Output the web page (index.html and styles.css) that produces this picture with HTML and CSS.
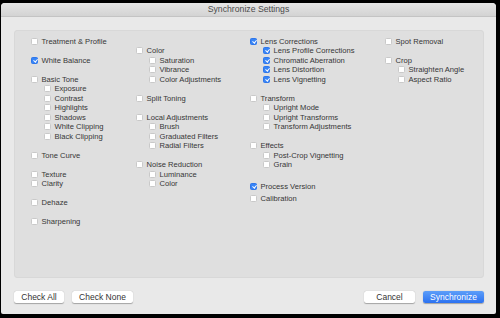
FILE: index.html
```html
<!DOCTYPE html>
<html lang="en">
  <head>
    <meta charset="UTF-8" />
    <title>Synchronize Settings</title>
    <link rel="stylesheet" href="styles.css">
  </head>
  <body>
    <div class="window">
      <!-- title bar -->
      <div class="titlebar">Synchronize Settings</div>

      <div class="content">
        <div class="panel">
          <!-- column 1 -->
          <div class="col">
            <div class="group"><div class="item"><span class="box"></span>Treatment &amp; Profile</div></div>
            <div class="group"><div class="item"><span class="box checked"></span>White Balance</div></div>
            <div class="group">
              <div class="item"><span class="box"></span>Basic Tone</div>
              <div class="item sub"><span class="box"></span>Exposure</div>
              <div class="item sub"><span class="box"></span>Contrast</div>
              <div class="item sub"><span class="box"></span>Highlights</div>
              <div class="item sub"><span class="box"></span>Shadows</div>
              <div class="item sub"><span class="box"></span>White Clipping</div>
              <div class="item sub"><span class="box"></span>Black Clipping</div>
            </div>
            <div class="group"><div class="item"><span class="box"></span>Tone Curve</div></div>
            <div class="group">
              <div class="item"><span class="box"></span>Texture</div>
              <div class="item"><span class="box"></span>Clarity</div>
            </div>
            <div class="group"><div class="item"><span class="box"></span>Dehaze</div></div>
            <div class="group"><div class="item"><span class="box"></span>Sharpening</div></div>
          </div>

          <!-- column 2 -->
          <div class="col col-offset">
            <div class="group">
              <div class="item"><span class="box"></span>Color</div>
              <div class="item sub"><span class="box"></span>Saturation</div>
              <div class="item sub"><span class="box"></span>Vibrance</div>
              <div class="item sub"><span class="box"></span>Color Adjustments</div>
            </div>
            <div class="group"><div class="item"><span class="box"></span>Split Toning</div></div>
            <div class="group">
              <div class="item"><span class="box"></span>Local Adjustments</div>
              <div class="item sub"><span class="box"></span>Brush</div>
              <div class="item sub"><span class="box"></span>Graduated Filters</div>
              <div class="item sub"><span class="box"></span>Radial Filters</div>
            </div>
            <div class="group">
              <div class="item"><span class="box"></span>Noise Reduction</div>
              <div class="item sub"><span class="box"></span>Luminance</div>
              <div class="item sub"><span class="box"></span>Color</div>
            </div>
          </div>

          <!-- column 3 -->
          <div class="col">
            <div class="group">
              <div class="item"><span class="box checked"></span>Lens Corrections</div>
              <div class="item sub"><span class="box checked"></span>Lens Profile Corrections</div>
              <div class="item sub"><span class="box checked"></span>Chromatic Aberration</div>
              <div class="item sub"><span class="box checked"></span>Lens Distortion</div>
              <div class="item sub"><span class="box checked"></span>Lens Vignetting</div>
            </div>
            <div class="group">
              <div class="item"><span class="box"></span>Transform</div>
              <div class="item sub"><span class="box"></span>Upright Mode</div>
              <div class="item sub"><span class="box"></span>Upright Transforms</div>
              <div class="item sub"><span class="box"></span>Transform Adjustments</div>
            </div>
            <div class="group">
              <div class="item"><span class="box"></span>Effects</div>
              <div class="item sub"><span class="box"></span>Post-Crop Vignetting</div>
              <div class="item sub"><span class="box"></span>Grain</div>
            </div>
            <div class="group loose">
              <div class="item"><span class="box checked"></span>Process Version</div>
              <div class="item"><span class="box"></span>Calibration</div>
            </div>
          </div>

          <!-- column 4 -->
          <div class="col">
            <div class="group"><div class="item"><span class="box"></span>Spot Removal</div></div>
            <div class="group">
              <div class="item"><span class="box"></span>Crop</div>
              <div class="item sub"><span class="box"></span>Straighten Angle</div>
              <div class="item sub"><span class="box"></span>Aspect Ratio</div>
            </div>
          </div>
        </div>

        <!-- buttons -->
        <div class="footer">
          <div class="btn-row">
            <button class="btn btn-all">Check All</button>
            <button class="btn btn-none">Check None</button>
          </div>
          <div class="btn-row">
            <button class="btn btn-cancel">Cancel</button>
            <button class="btn btn-primary">Synchronize</button>
          </div>
        </div>
      </div>
    </div>
  </body>
</html>
```

FILE: styles.css
```css
:root {
  --row: 9.5px;
  --text: #363636;
  --blue: #3784f6;
}

* {
  margin: 0;
  padding: 0;
  box-sizing: border-box;
}

body {
  font-family: "Liberation Sans", Arial, sans-serif;
  background: #000;
  width: 500px;
  height: 318px;
  overflow: hidden;
  padding: 3px 4px 4px 1px;
}

.window {
  width: 495px;
  height: 311px;
  background: #e9e9e9;
  border-radius: 4px 4px 2px 2px;
  display: flex;
  flex-direction: column;
  overflow: hidden;
}

/* title bar */
.titlebar {
  height: 14px;
  background: linear-gradient(to bottom, #e6e6e6, #d3d3d3);
  border-bottom: 1px solid #c4c4c4;
  text-align: center;
  font-size: 8.7px;
  line-height: 13px;
  color: #4b4b4b;
}

.content {
  flex: 1;
  padding: 13px 12px 11px 13px;
  display: flex;
  flex-direction: column;
}

/* options panel */
.panel {
  flex: 1;
  background: #dfdfdf;
  border: 1px solid #d8d8d8;
  border-radius: 3px;
  padding: 5.25px 0 0 16px;
  display: grid;
  grid-template-columns: 105px 114px 135px 1fr;
  align-items: start;
}

.col-offset {
  padding-top: var(--row);
}

.group + .group {
  margin-top: var(--row);
}

.group.loose {
  margin-top: 10.75px;
}

.item {
  height: var(--row);
  display: flex;
  align-items: center;
  font-size: 7.6px;
  color: var(--text);
  white-space: nowrap;
}

.loose .item {
  height: 12px;
}

.item.sub {
  padding-left: 13px;
}

.box {
  width: 7px;
  height: 7px;
  margin-right: 3.5px;
  background: #fff;
  border: 1px solid #c9c9c9;
  border-radius: 1.5px;
  flex-shrink: 0;
  position: relative;
}

.box.checked {
  background: var(--blue);
  border-color: #2f76ea;
}

.box.checked::after {
  content: "";
  position: absolute;
  left: 1.6px;
  top: 0.2px;
  width: 1.6px;
  height: 3.4px;
  border-right: 1.1px solid #fff;
  border-bottom: 1.1px solid #fff;
  transform: rotate(40deg);
}

/* footer buttons */
.footer {
  margin-top: 13px;
  display: flex;
  justify-content: space-between;
}

.btn-row {
  display: flex;
  gap: 8px;
}

.btn {
  height: 12.5px;
  border: none;
  border-radius: 2.5px;
  background: #fff;
  box-shadow: 0 0.5px 1px rgba(0, 0, 0, 0.3);
  font-family: "Liberation Sans", Arial, sans-serif;
  font-size: 8.5px;
  color: #333;
  line-height: 12.5px;
}

.btn-all {
  width: 50px;
}

.btn-none {
  width: 61px;
}

.btn-cancel {
  width: 51px;
}

.btn-primary {
  width: 61px;
  background: linear-gradient(to bottom, #5d9ef9, #2c72f1);
  color: #fff;
}
```
